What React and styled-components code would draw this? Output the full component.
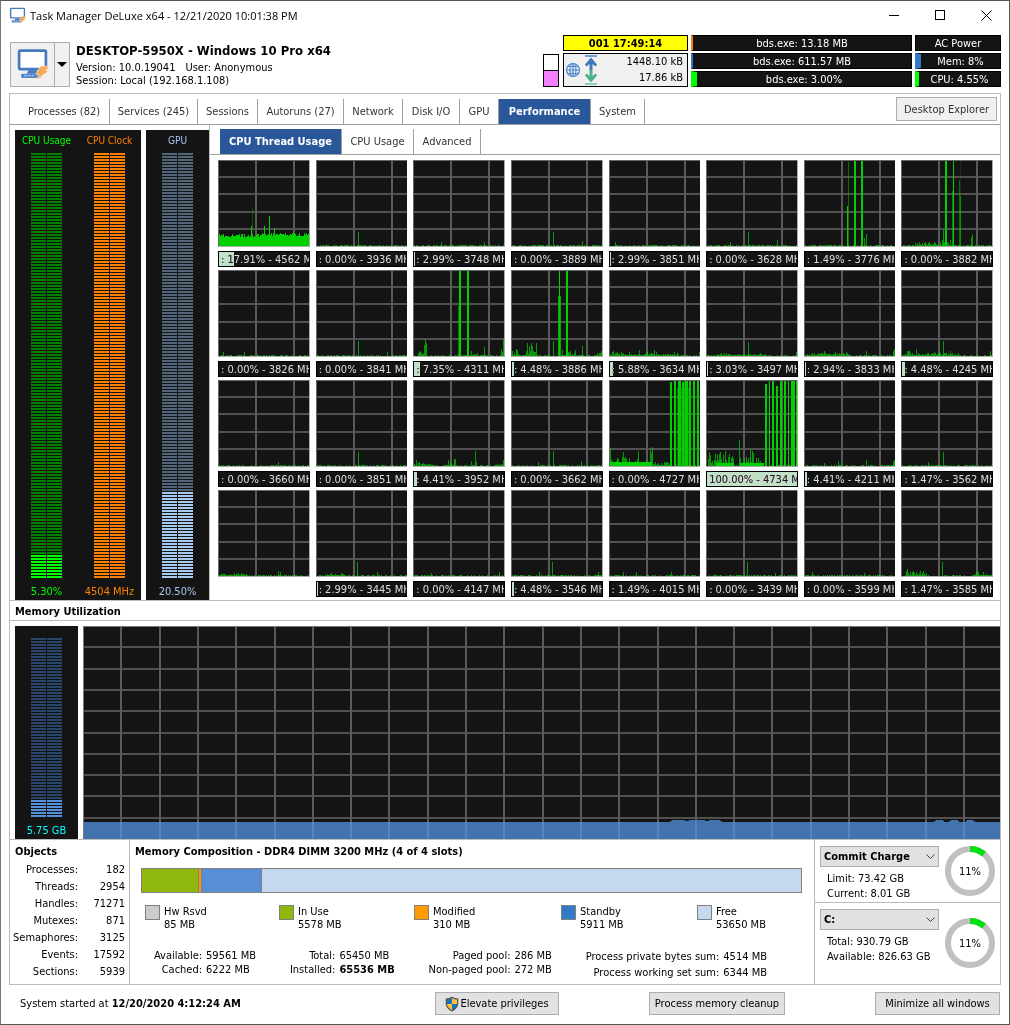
import React from "react";
import styled, { createGlobalStyle } from "styled-components";

// data
const TABS = [
  { label: "Processes (82)", w: 91 },
  { label: "Services (245)", w: 88 },
  { label: "Sessions", w: 60 },
  { label: "Autoruns (27)", w: 86 },
  { label: "Network", w: 59 },
  { label: "Disk I/O", w: 57 },
  { label: "GPU", w: 39 },
  { label: "Performance", w: 92, active: true },
  { label: "System", w: 54 },
];

const SUBTABS = [
  { label: "CPU Thread Usage", w: 122, active: true },
  { label: "CPU Usage", w: 72 },
  { label: "Advanced", w: 67 },
];

// noise: [from, to, max height], spikes: [x, height, width, opacity]
const THREADS = [
  { usage: 17.91, mhz: "4562 M", solid: true, spikes: [[34, 38, 1, 0.3], [33, 20, 1], [46, 20, 1], [51, 30, 1], [56, 18, 1]] },
  { usage: 0, mhz: "3936 MHz", spikes: [[42, 14, 1]] },
  { usage: 2.99, mhz: "3748 MHz", spikes: [[28, 4, 1], [71, 4, 1]] },
  { usage: 0, mhz: "3889 MHz", spikes: [[42, 14, 1], [71, 5, 1]] },
  { usage: 2.99, mhz: "3851 MHz", spikes: [[6, 4, 1]] },
  { usage: 0, mhz: "3628 MHz", spikes: [[42, 14, 1], [24, 4, 1], [71, 6, 1]] },
  { usage: 1.49, mhz: "3776 MHz", spikes: [[44, 84, 1, 0.5], [43, 40, 1], [50, 87, 2], [57, 87, 2], [60, 8, 1], [62, 12, 1]] },
  { usage: 0, mhz: "3882 MHz", noise: [[14, 50, 4]], spikes: [[42, 16, 1], [44, 87, 2], [52, 87, 1], [51, 55, 1, 0.6], [58, 66, 1, 0.5], [59, 50, 1, 0.6], [59, 87, 1, 0.15], [70, 9, 1], [71, 12, 1, 0.6]] },
  { usage: 0, mhz: "3826 MHz", spikes: [[26, 4, 1], [5, 4, 1]] },
  { usage: 0, mhz: "3841 MHz", spikes: [[42, 15, 1], [71, 4, 1]] },
  { usage: 7.35, mhz: "4311 MHz", noise: [[5, 14, 18], [58, 66, 5], [88, 91, 22]], spikes: [[46, 85, 2], [45, 50, 1, 0.5], [54, 87, 2], [71, 9, 1]] },
  { usage: 4.48, mhz: "3886 MHz", noise: [[0, 8, 5], [14, 26, 19], [50, 66, 5], [86, 91, 5]], spikes: [[42, 15, 1], [47, 60, 3, 0.8], [48, 86, 1], [55, 85, 2], [71, 10, 1]] },
  { usage: 5.88, mhz: "3634 MHz", noise: [[0, 70, 4]], spikes: [[38, 5, 1], [90, 4, 1]] },
  { usage: 3.03, mhz: "3497 MHz", noise: [[10, 60, 3]], spikes: [[42, 14, 1], [90, 4, 1]] },
  { usage: 2.94, mhz: "3833 MHz", noise: [[0, 45, 4]], spikes: [[62, 5, 1], [89, 5, 1], [90, 7, 1]] },
  { usage: 4.48, mhz: "4245 MHz", noise: [[0, 60, 5]], spikes: [[42, 15, 1], [89, 5, 1]] },
  { usage: 0, mhz: "3660 MHz", spikes: [[60, 4, 1]] },
  { usage: 0, mhz: "3851 MHz", spikes: [[42, 14, 1]] },
  { usage: 4.41, mhz: "3952 MHz", noise: [[0, 18, 5], [34, 44, 6], [58, 64, 5], [82, 91, 5]], spikes: [[62, 15, 1]] },
  { usage: 0, mhz: "3662 MHz", spikes: [[42, 15, 1], [27, 4, 1], [70, 5, 1]] },
  {
    usage: 0,
    mhz: "4727 MHz",
    noise: [[1, 44, 15], [44, 60, 6]],
    spikes: [[1, 18, 1], [41, 16, 1], [1, 4, 42], [61, 84, 2], [65, 87, 2], [69, 87, 3], [73, 84, 2], [76, 87, 3], [68, 78, 12, 0.5], [80, 86, 2], [84, 87, 2], [88, 87, 2]],
  },
  {
    usage: 100,
    mhz: "4734 M",
    noise: [[2, 28, 16], [34, 58, 14]],
    spikes: [[14, 14, 1], [33, 26, 1], [44, 16, 1], [10, 3, 18], [34, 3, 24], [59, 82, 2], [63, 87, 1], [66, 87, 2], [70, 80, 2], [74, 87, 2], [78, 87, 2], [82, 85, 1], [85, 87, 3], [88, 87, 1], [90, 87, 1]],
  },
  { usage: 4.41, mhz: "4211 MHz", spikes: [[20, 3, 1], [34, 5, 1], [62, 6, 1], [89, 5, 1], [90, 6, 1]] },
  { usage: 1.47, mhz: "3562 MHz", spikes: [[42, 14, 1], [27, 4, 1]] },
  { hidden: true, noise: [[0, 30, 3]], spikes: [[60, 5, 1], [62, 4, 1]] },
  { usage: 2.99, mhz: "3445 MHz", noise: [[10, 30, 4]], spikes: [[41, 14, 1], [61, 4, 1]] },
  { usage: 0, mhz: "4147 MHz", spikes: [[18, 3, 1], [86, 4, 1]] },
  { usage: 4.48, mhz: "3546 MHz", spikes: [[41, 14, 1], [28, 4, 1], [87, 4, 1]] },
  { usage: 1.49, mhz: "4015 MHz", spikes: [[14, 4, 1], [27, 4, 1], [62, 4, 1]] },
  { usage: 0, mhz: "3439 MHz", spikes: [[41, 14, 1], [69, 3, 1]] },
  { usage: 0, mhz: "3599 MHz", spikes: [[8, 4, 1], [60, 3, 1]] },
  { usage: 1.47, mhz: "3585 MHz", noise: [[4, 26, 5], [74, 91, 4]], spikes: [[41, 14, 1]] },
];

const OBJECTS = [
  ["Processes:", "182"],
  ["Threads:", "2954"],
  ["Handles:", "71271"],
  ["Mutexes:", "871"],
  ["Semaphores:", "3125"],
  ["Events:", "17592"],
  ["Sections:", "5939"],
];

const LEGEND = [
  { name: "Hw Rsvd", value: "85 MB", color: "#cccccc", w: 134 },
  { name: "In Use", value: "5578 MB", color: "#8fb80c", w: 135 },
  { name: "Modified", value: "310 MB", color: "#ff9900", w: 147 },
  { name: "Standby", value: "5911 MB", color: "#3279c6", w: 136 },
  { name: "Free", value: "53650 MB", color: "#c6d7f0", w: 100 },
];

const bars = (t, seed) => {
  const out = [];
  let s = seed * 7919 + 13;
  const rand = () => {
    s = (s * 1103515245 + 12345) % 2147483648;
    return s / 2147483648;
  };
  for (let x = 1; x < 91; x++) {
    let h = rand() > 0.5 ? 1 : 0;
    if (t.solid) h = 9 + Math.floor(rand() * 4) + (x > 42 ? 1 : 0);
    (t.noise || []).forEach(([from, to, max]) => {
      if (x >= from && x < to) h = 1 + Math.floor(rand() * rand() * max * 1.4);
    });
    if (h) out.push([x, h, 1]);
  }
  return out.concat(t.spikes);
};

const fillWidth = (usage) => (usage === 100 ? "100%" : `calc(${usage}% - 2px)`);

// icons
const PcIcon = ({ size }) => (
  <svg width={size} height={size} viewBox="0 0 32 32" aria-hidden="true">
    <rect x="3" y="2.5" width="26" height="18" rx="1" fill="#fff" stroke="#4479bd" strokeWidth="2.600" />
    <path d="M12 21.500h8l1.500 3.500h-11z" fill="#4479bd" />
    <rect x="5" y="25" width="19" height="4" rx=".8" fill="#5087c8" />
    <path d="M8 27h10" stroke="#dce8f6" strokeDasharray="1.500 1" />
    <path d="M24 17.500h8.500l-4 4.500h3.500L19 31.500l3.500-6H19z" fill="#f7a94f" stroke="#fff" strokeWidth=".5" />
  </svg>
);

const NetIcon = () => (
  <svg width="34" height="30" viewBox="0 0 34 30" aria-hidden="true">
    <g fill="none" stroke="#4a86cc" strokeWidth="1.2">
      <circle cx="8" cy="15" r="6.5" />
      <ellipse cx="8" cy="15" rx="3" ry="6.5" />
      <path d="M8 8.500v13M1.500 15h13M2.500 11.500h11M2.500 18.500h11" />
    </g>
    <path d="M20 1h12" stroke="#6f9fd6" strokeWidth="2" />
    <path d="M26 2.500l6 7-1.500 2-3-2.500V15h-3V9l-3 2.500-1.500-2z" fill="#3f78bd" />
    <path d="M26 27.500l6-7-1.500-2-3 2.500v-6h-3v6l-3-2.500-1.500 2z" fill="#4fb08a" />
    <path d="M20 29h12" stroke="#8ccfb3" strokeWidth="2" />
  </svg>
);

const ShieldIcon = () => (
  <svg width="14" height="16" viewBox="0 0 14 16" aria-hidden="true">
    <path d="M7 .5C5 2 3 2.300.7 2.500V7c0 4 2.500 6.800 6.300 8.500 3.800-1.700 6.300-4.500 6.300-8.500V2.500C11 2.300 9 2 7 .5z" fill="#555" />
    <path d="M7 2C5.500 3 4 3.500 2 3.600V8h5z" fill="#1c74bf" />
    <path d="M7 2c1.500 1 3 1.500 5 1.600V8H7z" fill="#fdc13c" />
    <path d="M2 8h5v6.200C4.300 12.800 2.300 10.800 2 8z" fill="#fdc13c" />
    <path d="M12 8H7v6.200C9.700 12.800 11.700 10.800 12 8z" fill="#1c74bf" />
  </svg>
);

const Chevron = () => (
  <svg width="9" height="6" viewBox="0 0 9 6" aria-hidden="true">
    <path d="M.5 .5l4 4 4-4" fill="none" stroke="#444" />
  </svg>
);

const ThreadChart = ({ thread, seed }) => (
  <ChartSvg viewBox="0 0 92 87" preserveAspectRatio="none" shapeRendering="crispEdges">
    <rect width="92" height="87" fill="#141414" />
    {[16, 33, 51, 68].map((y) => (
      <rect key={y} x="0" y={y} width="92" height="2" fill="#505050" />
    ))}
    {[37, 75].map((x) => (
      <rect key={x} x={x} y="0" width="2" height="87" fill="#5a5a5a" />
    ))}
    {bars(thread, seed).map(([x, h, w, o], i) => (
      <rect
        key={i}
        x={x}
        y={Math.max(86 - h, 0)}
        width={w}
        height={h}
        fill="#00d000"
        opacity={o || (thread.solid || w > 1 || h > 30 ? 1 : 0.7)}
      />
    ))}
    <rect width="92" height="1" fill="#666" />
    <rect width="1" height="87" fill="#666" />
    <rect x="91" width="1" height="87" fill="#aaa" />
    <rect y="86" width="92" height="1" fill="#aaa" />
  </ChartSvg>
);

const MemoryChart = () => (
  <ChartSvg viewBox="0 0 917 213" preserveAspectRatio="none" shapeRendering="crispEdges">
    <rect width="917" height="213" fill="#141414" />
    {Array.from({ length: 9 }, (_, i) => (
      <rect key={i} x="0" y={Math.round(21.3 * (i + 1)) - 1} width="917" height="2" fill="#505050" />
    ))}
    {Array.from({ length: 23 }, (_, i) => (
      <rect key={i} x={Math.round(38.3 * (i + 1)) - 1} y="0" width="2" height="213" fill="#5a5a5a" />
    ))}
    <path
      d="M0 213V196H586l4-2h10l4 1 4-1h12l4 1 4-1h8l4 2H850l4-2h5l3 2h3l4-2h5l3 2h5l3-2h4l4 2H917V213z"
      fill="#4678b4"
      opacity=".95"
    />
    {Array.from({ length: 23 }, (_, i) => (
      <rect key={i} x={Math.round(38.3 * (i + 1)) - 1} y="196" width="2" height="17" fill="#5585be" />
    ))}
    <rect width="917" height="1" fill="#777" />
    <rect width="1" height="213" fill="#777" />
  </ChartSvg>
);

const Ring = ({ percent }) => {
  const len = 2 * Math.PI * 22;
  return (
    <svg width="50" height="50" viewBox="0 0 50 50" role="img" aria-label={`${percent}%`}>
      <circle cx="25" cy="25" r="22" fill="none" stroke="#c0c0c0" strokeWidth="6" />
      <circle
        cx="25"
        cy="25"
        r="22"
        fill="none"
        stroke="#00e010"
        strokeWidth="6"
        strokeDasharray={`${(len * percent) / 100} ${len}`}
        transform="rotate(-90 25 25)"
      />
      <text x="25" y="29" textAnchor="middle" fontSize="11">
        {percent}%
      </text>
    </svg>
  );
};

const Meter = ({ title, value, color, dim, bright, total, lit }) => (
  <MeterBox color={color}>
    {title ? <span>{title}</span> : null}
    <Led>
      <Segments color={dim} count={total - lit} />
      <Segments color={bright} count={lit} />
    </Led>
    <span>{value}</span>
  </MeterBox>
);

const App = () => (
  <>
    <GlobalStyle />
    <Window>
      <TitleBar>
        <PcIcon size={17} />
        <Title>Task Manager DeLuxe x64 - 12/21/2020 10:01:38 PM</Title>
        <WinButton aria-label="Minimize">
          <svg width="11" height="11" shapeRendering="crispEdges"><path d="M0 5.500h10" stroke="#000" /></svg>
        </WinButton>
        <WinButton aria-label="Maximize">
          <svg width="11" height="11" shapeRendering="crispEdges"><rect x=".5" y=".5" width="9" height="9" fill="none" stroke="#000" /></svg>
        </WinButton>
        <WinButton aria-label="Close">
          <svg width="11" height="11"><path d="M.5 .5l10 10M10.500 .5l-10 10" stroke="#000" /></svg>
        </WinButton>
      </TitleBar>

      <Header>
        <SplitButton>
          <button aria-label="Computer"><PcIcon size={33} /></button>
          <button aria-label="More"><svg width="10" height="5"><path d="M0 0h10l-5 5z" /></svg></button>
        </SplitButton>
        <HostInfo>
          <h1>DESKTOP-5950X - Windows 10 Pro x64</h1>
          <p><span>Version: 10.0.19041</span><span>User: Anonymous</span></p>
          <p>Session: Local (192.168.1.108)</p>
        </HostInfo>
        <MiniBox><i /></MiniBox>
        <StatColumn w={125}>
          <Uptime>001 17:49:14</Uptime>
          <Network>
            <NetIcon />
            <div>
              <span>1448.10 kB</span>
              <span>17.86 kB</span>
            </div>
          </Network>
        </StatColumn>
        <StatColumn w={221}>
          <Stat color="#ff8000" fill={1}>bds.exe: 13.18 MB</Stat>
          <Stat color="#3279c6" fill={1}>bds.exe: 611.57 MB</Stat>
          <Stat color="#00ff00" fill={5}>bds.exe: 3.00%</Stat>
        </StatColumn>
        <StatColumn w={86}>
          <Stat fill={0}>AC Power</Stat>
          <Stat color="#3279c6" fill={5}>Mem: 8%</Stat>
          <Stat color="#00ff00" fill={3}>CPU: 4.55%</Stat>
        </StatColumn>
      </Header>

      <Panel>
        <TabRow as="nav">
          {TABS.map((t) => (
            <Tab key={t.label} w={t.w} active={t.active}>{t.label}</Tab>
          ))}
          <ExplorerButton>Desktop Explorer</ExplorerButton>
        </TabRow>

        <Performance>
          <Gauges>
            <GaugePanel>
              <Meter title="CPU Usage" value="5.30%" color="#00ff00" dim="#008000" bright="#00ff00" total={142} lit={8} />
              <Meter title="CPU Clock" value="4504 MHz" color="#ff8000" dim="#ff8000" bright="#ff8000" total={142} lit={142} />
            </GaugePanel>
            <GaugePanel>
              <Meter title="GPU" value="20.50%" color="#a6caf0" dim="#53657a" bright="#a6caf0" total={142} lit={29} />
            </GaugePanel>
          </Gauges>
          <ThreadArea>
            <SubTabRow>
              {SUBTABS.map((t) => (
                <Tab key={t.label} w={t.w} active={t.active}>{t.label}</Tab>
              ))}
            </SubTabRow>
            <ThreadGrid>
              {THREADS.map((t, i) => (
                <Thread key={i}>
                  <ThreadChart thread={t} seed={i + 1} />
                  {t.hidden ? null : (
                    <ThreadLabel>
                      <b style={{ width: fillWidth(t.usage) }} />
                      <span>
                        {t.usage === 100 ? "" : ": "}
                        {t.usage.toFixed(2)}% - {t.mhz}
                      </span>
                    </ThreadLabel>
                  )}
                </Thread>
              ))}
            </ThreadGrid>
          </ThreadArea>
        </Performance>

        <MemoryTitle>Memory Utilization</MemoryTitle>
        <MemoryRow>
          <GaugePanel>
            <Meter value="5.75 GB" color="#00ffff" dim="#294569" bright="#5690d8" total={60} lit={6} />
          </GaugePanel>
          <MemoryChart />
        </MemoryRow>

        <Bottom>
          <Objects>
            <h2>Objects</h2>
            <table>
              <tbody>
                {OBJECTS.map(([name, value]) => (
                  <tr key={name}>
                    <th scope="row">{name}</th>
                    <td>{value}</td>
                  </tr>
                ))}
              </tbody>
            </table>
          </Objects>

          <Composition>
            <h2>Memory Composition - DDR4 DIMM 3200 MHz (4 of 4 slots)</h2>
            <CompBar>
              <CompPart color="#8fb80c" grow={56} />
              <CompPart color="#ff9900" grow={2} />
              <CompPart color="#568fd6" grow={59} />
              <CompPart color="#c6d7f0" grow={539} />
            </CompBar>
            <Legend>
              {LEGEND.map((l) => (
                <LegendItem key={l.name} w={l.w} color={l.color}>
                  <i />
                  <div>{l.name}<br />{l.value}</div>
                </LegendItem>
              ))}
            </Legend>
            <Summary>
              <Pairs>
                <span>Available:</span><span>59561 MB</span>
                <span>Cached:</span><span>6222 MB</span>
              </Pairs>
              <Pairs>
                <span>Total:</span><span>65450 MB</span>
                <span>Installed:</span><strong>65536 MB</strong>
              </Pairs>
              <Pairs>
                <span>Paged pool:</span><span>286 MB</span>
                <span>Non-paged pool:</span><span>272 MB</span>
              </Pairs>
              <Pairs tall>
                <span>Process private bytes sum:</span><span>4514 MB</span>
                <span>Process working set sum:</span><span>6344 MB</span>
              </Pairs>
            </Summary>
          </Composition>

          <Side>
            <SideBlock>
              <div>
                <Picker>
                  <select aria-label="Memory counter" defaultValue="a"><option value="a">Commit Charge</option></select>
                  <Chevron />
                </Picker>
                <p>Limit: 73.42 GB</p>
                <p>Current: 8.01 GB</p>
              </div>
              <Ring percent={11} />
            </SideBlock>
            <SideBlock>
              <div>
                <Picker>
                  <select aria-label="Drive" defaultValue="c"><option value="c">C:</option></select>
                  <Chevron />
                </Picker>
                <p>Total: 930.79 GB</p>
                <p>Available: 826.63 GB</p>
              </div>
              <Ring percent={11} />
            </SideBlock>
          </Side>
        </Bottom>
      </Panel>

      <Footer>
        <p>System started at <strong>12/20/2020 4:12:24 AM</strong></p>
        <FootButton w={124}><ShieldIcon />Elevate privileges</FootButton>
        <FootButton w={136}>Process memory cleanup</FootButton>
        <FootButton w={125}>Minimize all windows</FootButton>
      </Footer>
    </Window>
  </>
);

export default App;

// styles
const GlobalStyle = createGlobalStyle`
  * {
    box-sizing: border-box;
  }
  body {
    margin: 0;
    background: #fff;
    color: #000;
    font: 11px/13px "DejaVu Sans Condensed", "DejaVu Sans", sans-serif;
  }
  h1, h2, p {
    margin: 0;
  }
  h2 {
    font-size: 11px;
    line-height: 14px;
  }
  button, select {
    font: inherit;
    color: inherit;
    margin: 0;
    padding: 0;
    border-radius: 0;
  }
`;
const Window = styled.div`
  display: flex;
  flex-direction: column;
  min-height: 100vh;
  border: 1px solid #555;
  border-left-color: #777;
  white-space: nowrap;
`;
const TitleBar = styled.div`
  display: flex;
  align-items: center;
  height: 29px;
  padding-left: 8px;
`;
const Title = styled.span`
  flex: 1;
  margin-left: 4px;
  font: 11px/16px "Open Sans", "Noto Sans", sans-serif;
`;
const WinButton = styled.button`
  display: flex;
  align-items: center;
  justify-content: center;
  width: 46px;
  height: 28px;
  border: 0;
  background: none;
`;
const Header = styled.header`
  display: flex;
  align-items: flex-start;
  gap: 3px;
  padding: 5px 8px 6px 9px;
`;
const SplitButton = styled.div`
  display: flex;
  height: 45px;
  margin-top: 7px;
  border: 1px solid #adadad;
  background: #f0f0f0;

  button {
    display: flex;
    align-items: center;
    justify-content: center;
    width: 43px;
    border: 0;
    background: none;
  }
  button + button {
    width: 15px;
    border-left: 1px solid #adadad;
  }
`;
const HostInfo = styled.div`
  flex: 1;
  padding: 7px 0 0 3px;

  h1 {
    margin-bottom: 1px;
    font-size: 13px;
    line-height: 18px;
  }
  span {
    margin-right: 10px;
  }
`;
const MiniBox = styled.div`
  display: flex;
  align-items: flex-end;
  width: 16px;
  height: 33px;
  margin: 19px 1px 0 0;
  border: 1px solid #000;

  i {
    flex: 1;
    height: 16px;
    border-top: 1px solid #000;
    background: #f580ff;
  }
`;
const StatColumn = styled.div`
  display: flex;
  flex-direction: column;
  gap: 2px;
  width: ${(props) => props.w}px;
`;
const Uptime = styled.div`
  height: 16px;
  border: 1px solid #000;
  background: #ffff00;
  font-weight: bold;
  line-height: 16px;
  text-align: center;
`;
const Network = styled.div`
  display: flex;
  align-items: center;
  justify-content: space-between;
  height: 34px;
  padding: 0 4px 0 1px;
  border: 1px solid #000;
  background: #f0f0f0;

  div {
    display: flex;
    flex-direction: column;
    text-align: right;
    line-height: 16px;
  }
`;
const Stat = styled.div`
  height: 16px;
  border: 1px solid #000;
  border-left: ${(props) => props.fill + 1}px solid ${(props) => props.color || "#000"};
  background: #141414;
  color: #fff;
  line-height: 16px;
  text-align: center;
`;
const Panel = styled.main`
  margin: 0 8px;
  border: 1px solid #bbb;
`;
const TabRow = styled.div`
  display: flex;
  align-items: flex-end;
  height: 31px;
  padding-left: 9px;
  border-bottom: 1px solid #a0a0a0;
`;
const SubTabRow = styled(TabRow)`
  height: 30px;
  padding-left: 10px;
`;
const Tab = styled.button`
  width: ${(props) => props.w}px;
  height: 25px;
  border: 0;
  border-right: 1px solid #a0a0a0;
  background: ${(props) => (props.active ? "#2a579a" : "#fff")};
  color: ${(props) => (props.active ? "#fff" : "#333")};
  font-weight: ${(props) => (props.active ? "bold" : "normal")};
`;
const ExplorerButton = styled.button`
  width: 101px;
  height: 24px;
  margin: 0 3px 3px auto;
  border: 1px solid #adadad;
  background: #f0f0f0;
  color: #333;
`;
const Performance = styled.section`
  display: flex;
`;
const Gauges = styled.div`
  display: flex;
  gap: 5px;
  padding: 5px 0 0 5px;
`;
const GaugePanel = styled.div`
  display: flex;
  background: #141414;
`;
const MeterBox = styled.div`
  display: flex;
  flex-direction: column;
  align-items: center;
  justify-content: space-between;
  width: 63px;
  padding: 4px 0 2px;
  color: ${(props) => props.color};
  font-size: 10px;

  span:last-child {
    font-size: 11px;
  }
`;
const Led = styled.div`
  width: 31px;
  margin: auto 0 6px;
`;
const Segments = styled.div`
  height: ${(props) => props.count * 3}px;
  background: linear-gradient(#141414, #141414) center / 1px 100% no-repeat,
    repeating-linear-gradient(${(props) => props.color} 0 2px, #141414 2px 3px);
`;
const ThreadArea = styled.div`
  flex: 1;
  min-width: 0;
  border-left: 1px solid #bbb;
`;
const ThreadGrid = styled.div`
  display: grid;
  grid-template-columns: repeat(8, minmax(0, 1fr));
  gap: 3px 6px;
  padding: 5px 7px 3px 8px;
`;
const Thread = styled.div`
  display: flex;
  flex-direction: column;
  gap: 4px;
  height: 107px;
`;
const ChartSvg = styled.svg`
  display: block;
  width: 100%;
  height: 87px;
`;
const ThreadLabel = styled.div`
  display: grid;
  grid-template-rows: 14px;
  height: 16px;
  border: 1px solid #000;
  background: #141414;
  overflow: hidden;

  b,
  span {
    grid-area: 1 / 1;
  }
  b {
    background: #c0e0c8;
  }
  /* text inverts over the filled part */
  span {
    padding-left: 2px;
    color: #f0f0f0;
    line-height: 16px;
    mix-blend-mode: difference;
  }
`;
const MemoryTitle = styled.h2`
  padding: 4px 5px 1px;
  border: solid #bbb;
  border-width: 1px 0;
`;
const MemoryRow = styled.section`
  display: flex;
  gap: 5px;
  padding: 5px 0 0 5px;

  ${ChartSvg} {
    flex: 1;
    min-width: 0;
    height: 213px;
  }
`;
const Bottom = styled.section`
  display: flex;
  border-top: 1px solid #bbb;
`;
const Objects = styled.div`
  width: 120px;
  padding: 5px 4px 4px 3px;
  border-right: 1px solid #bbb;

  h2 {
    padding-left: 2px;
  }
  table {
    width: 100%;
    margin-top: 2px;
    border-collapse: collapse;
  }
  th,
  td {
    height: 17px;
    padding: 0;
    font-weight: normal;
    text-align: right;
  }
  th {
    width: 62px;
  }
`;
const Composition = styled.div`
  flex: 1;
  min-width: 0;
  padding: 5px 12px 0 11px;

  h2 {
    margin-left: -6px;
  }
`;
const CompBar = styled.div`
  display: flex;
  height: 25px;
  margin: 9px 0 12px;
  border: 1px solid #808080;
`;
const CompPart = styled.div`
  flex: ${(props) => props.grow};
  background: ${(props) => props.color};

  &:not(:last-child) {
    border-right: 1px solid #808080;
  }
`;
const Legend = styled.div`
  display: flex;
  padding-left: 4px;
`;
const LegendItem = styled.div`
  display: flex;
  gap: 4px;
  width: ${(props) => props.w}px;

  i {
    width: 15px;
    height: 15px;
    border: 1px solid #808080;
    background: ${(props) => props.color};
  }
`;
const Summary = styled.div`
  display: flex;
  justify-content: space-between;
  padding: 18px 35px 0 13px;
`;
const Pairs = styled.div`
  display: grid;
  grid-template-columns: auto auto;
  align-content: start;
  column-gap: 4px;
  line-height: ${(props) => (props.tall ? 16 : 14)}px;

  span:nth-child(odd) {
    text-align: right;
  }
`;
const Side = styled.div`
  width: 186px;
  border-left: 1px solid #bbb;
`;
const SideBlock = styled.div`
  display: flex;
  align-items: flex-start;
  justify-content: space-between;
  padding: 6px 5px 1px;

  & + & {
    padding-bottom: 16px;
    border-top: 1px solid #bbb;
  }
  & + & > svg {
    margin-top: 9px;
  }
  p {
    padding-left: 7px;
    line-height: 15px;
  }
`;
const Picker = styled.label`
  display: grid;
  align-items: center;
  width: 119px;
  height: 21px;
  margin-bottom: 4px;

  select,
  svg {
    grid-area: 1 / 1;
  }
  select {
    height: 21px;
    padding: 0 3px;
    border: 1px solid #adadad;
    background: #e1e1e1;
    font-weight: bold;
    appearance: none;
  }
  svg {
    justify-self: end;
    margin-right: 4px;
    pointer-events: none;
  }
`;
const Footer = styled.footer`
  display: flex;
  align-items: center;
  justify-content: space-between;
  padding: 7px 9px 9px 19px;

  p {
    width: 325px;
  }
`;
const FootButton = styled.button`
  display: flex;
  align-items: center;
  justify-content: center;
  gap: 1px;
  width: ${(props) => props.w}px;
  height: 23px;
  border: 1px solid #adadad;
  background: #e1e1e1;
`;
